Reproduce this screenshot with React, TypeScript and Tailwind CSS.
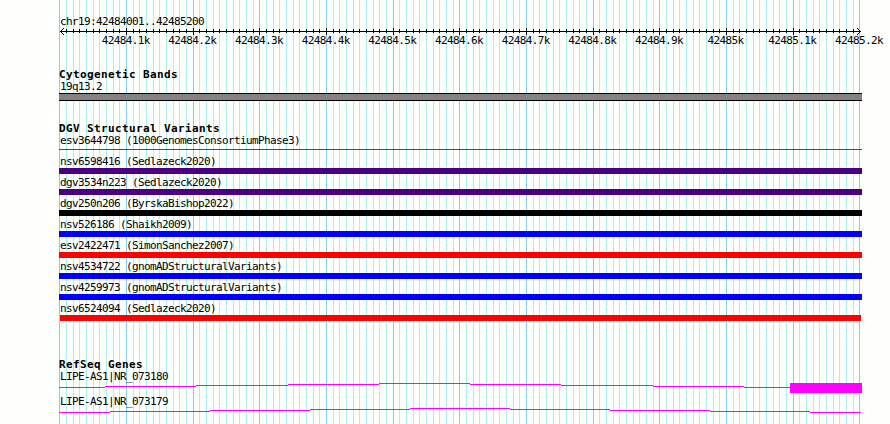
const LEFT = 59;

const ticks = Array.from({ length: 121 }, (_, k) => ({
  x: Math.round(59.33 + (k * 20) / 3),
  major: k % 10 === 0,
}));

const tickLabels = [
  '42484.1k', '42484.2k', '42484.3k', '42484.4k', '42484.5k', '42484.6k',
  '42484.7k', '42484.8k', '42484.9k', '42485k', '42485.1k', '42485.2k',
];

const variants = [
  { label: 'nsv6598416 (Sedlazeck2020)', bar: 'w-[803px] bg-[#4b0082]' },
  { label: 'dgv3534n223 (Sedlazeck2020)', bar: 'w-[803px] bg-[#4b0082]' },
  { label: 'dgv250n206 (ByrskaBishop2022)', bar: 'w-[803px] bg-black' },
  { label: 'nsv526186 (Shaikh2009)', bar: 'w-[803px] bg-[#0000ff]' },
  { label: 'esv2422471 (SimonSanchez2007)', bar: 'w-[803px] bg-[#ff0000]' },
  { label: 'nsv4534722 (gnomADStructuralVariants)', bar: 'w-[803px] bg-[#0000ff]' },
  { label: 'nsv4259973 (gnomADStructuralVariants)', bar: 'w-[803px] bg-[#0000ff]' },
  { label: 'nsv6524094 (Sedlazeck2020)', bar: 'ml-px w-[801px] bg-[#ff0000]' },
];

// intron lines, as [x start, x end, y] inside each gene's drawing
const gene180 = [
  [0, 46, 4], [46, 137, 3], [137, 229, 2], [229, 320, 1], [320, 411, 0],
  [411, 502, 1], [502, 594, 2], [594, 685, 3], [685, 731, 4],
];
const gene179 = [
  [0, 51, 4], [51, 151, 3], [151, 251, 2], [251, 351, 1], [351, 451, 0],
  [451, 551, 1], [551, 651, 2], [651, 751, 3], [751, 802, 4],
];

function Grid() {
  return (
    <svg className="absolute inset-0" width="890" height="424" shapeRendering="crispEdges">
      {ticks.map(({ x, major }) => (
        <rect key={x} x={x} y="0" width="1" height="424" fill={major ? '#87ceeb' : '#afeeee'} />
      ))}
    </svg>
  );
}

function Ruler() {
  return (
    <svg className="block" width="803" height="7" shapeRendering="crispEdges">
      <rect x="1" y="3" width="801" height="1" />
      {ticks.slice(1, -1).map(({ x, major }) => (
        <rect key={x} x={x - LEFT} y={major ? 0 : 1} width="1" height={major ? 7 : 4} />
      ))}
      {[1, 2, 3].map((d) => (
        <g key={d}>
          <rect x={1 + d} y={3 - d} width="1" height="1" />
          <rect x={1 + d} y={3 + d} width="1" height="1" />
          <rect x={801 - d} y={3 - d} width="1" height="1" />
          <rect x={801 - d} y={3 + d} width="1" height="1" />
        </g>
      ))}
    </svg>
  );
}

function Heading({ children }: { children: string }) {
  return <h2 className="h-3 text-[11px] leading-3 font-bold tracking-[0.38px]">{children}</h2>;
}

function Label({ children }: { children: string }) {
  return <div className="h-3 pl-px leading-3">{children}</div>;
}

function Introns({ segments }: { segments: number[][] }) {
  return (
    <>
      {segments.map(([x1, x2, y]) => (
        <rect key={x1} x={x1} y={y} width={x2 - x1} height="1" fill="#ff00ff" />
      ))}
    </>
  );
}

export default function App() {
  return (
    <div className="relative h-[424px] w-[890px] overflow-hidden bg-[#fdfffc] font-['DejaVu_Sans_Mono',monospace] text-[11px] tracking-[-0.622px] whitespace-pre text-black">
      <Grid />
      <div className="relative ml-[59px] flex flex-col pt-4">
        <Label>chr19:42484001..42485200</Label>
        <Ruler />
        <div className="ml-[33.4px] flex h-3">
          {tickLabels.map((label) => (
            <span key={label} className="w-[66.67px] shrink-0 text-center leading-3">{label}</span>
          ))}
        </div>

        <section className="mt-[22px]">
          <Heading>Cytogenetic Bands</Heading>
          <Label>19q13.2</Label>
          <div className="h-2 w-[803px] border-y border-black bg-[#848284]" />
        </section>

        <section className="mt-[22px]">
          <Heading>DGV Structural Variants</Heading>
          <Label>esv3644798 (1000GenomesConsortiumPhase3)</Label>
          <div className="mt-[2px] mb-[6px] h-px w-[803px] bg-[#ff0000]" />
          {variants.map(({ label, bar }) => (
            <div key={label} className="h-[21px]">
              <Label>{label}</Label>
              <div className={`h-1.5 ${bar}`} />
            </div>
          ))}
        </section>

        <section className="mt-[35px]">
          <Heading>RefSeq Genes</Heading>
          <Label>LIPE-AS1|NR_073180</Label>
          <svg className="block" width="803" height="13" shapeRendering="crispEdges">
            <Introns segments={gene180} />
            <rect x="731" y="0" width="72" height="10" fill="#ff00ff" />
          </svg>
          <Label>LIPE-AS1|NR_073179</Label>
          <svg className="block" width="803" height="6" shapeRendering="crispEdges">
            <Introns segments={gene179} />
          </svg>
        </section>
      </div>
    </div>
  );
}
